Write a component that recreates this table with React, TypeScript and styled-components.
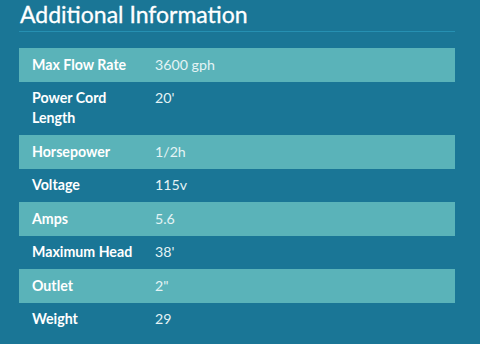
import React from 'react';
import styled, { createGlobalStyle } from 'styled-components';

const GlobalStyle = createGlobalStyle`
    html, body {
        margin: 0;
        padding: 0;
        background: #1a7696;
    }
    body {
        font-family: Lato, "Open Sans", sans-serif;
        color: #ffffff;
    }
`;

const Container = styled.div`
    width: 436px;
    margin-left: 19px;
    height: 344px;
    overflow: hidden;
`;

const Title = styled.h2`
    margin: 0;
    padding: 0 0 0 1px;
    font-size: 23px;
    font-weight: 400;
    line-height: 28px;
    height: 32px;
    color: #ffffff;
    border-bottom: 1px solid #2690b2;
    box-sizing: border-box;
    -webkit-text-stroke: 0.3px #ffffff;
`;

const SpecTable = styled.div`
    margin-top: 16px;
    display: flex;
    flex-direction: column;
`;

const SpecRow = styled.div<{ $striped: boolean }>`
    display: flex;
    align-items: flex-start;
    padding: 6.75px 0 6.75px 13px;
    background: ${(p) => (p.$striped ? '#5ab3b9' : 'transparent')};
    font-size: 14.2px;
    line-height: 20px;
`;

const Label = styled.div`
    width: 110px;
    margin-right: 13px;
    font-weight: 700;
    color: #ffffff;
`;

const Value = styled.div`
    font-weight: 400;
    color: #e4f3f5;
`;

const specs = [
    ['Max Flow Rate', '3600 gph'],
    ['Power Cord Length', "20'"],
    ['Horsepower', '1/2h'],
    ['Voltage', '115v'],
    ['Amps', '5.6'],
    ['Maximum Head', "38'"],
    ['Outlet', '2"'],
    ['Weight', '29'],
];

const App = (): React.ReactElement => {
    return (
        <Container>
            <GlobalStyle />
            <Title>Additional Information</Title>
            <SpecTable>
                {specs.map(([label, value], i) => (
                    <SpecRow key={label} $striped={i % 2 === 0}>
                        <Label>{label}</Label>
                        <Value>{value}</Value>
                    </SpecRow>
                ))}
            </SpecTable>
        </Container>
    );
};

export default App;
